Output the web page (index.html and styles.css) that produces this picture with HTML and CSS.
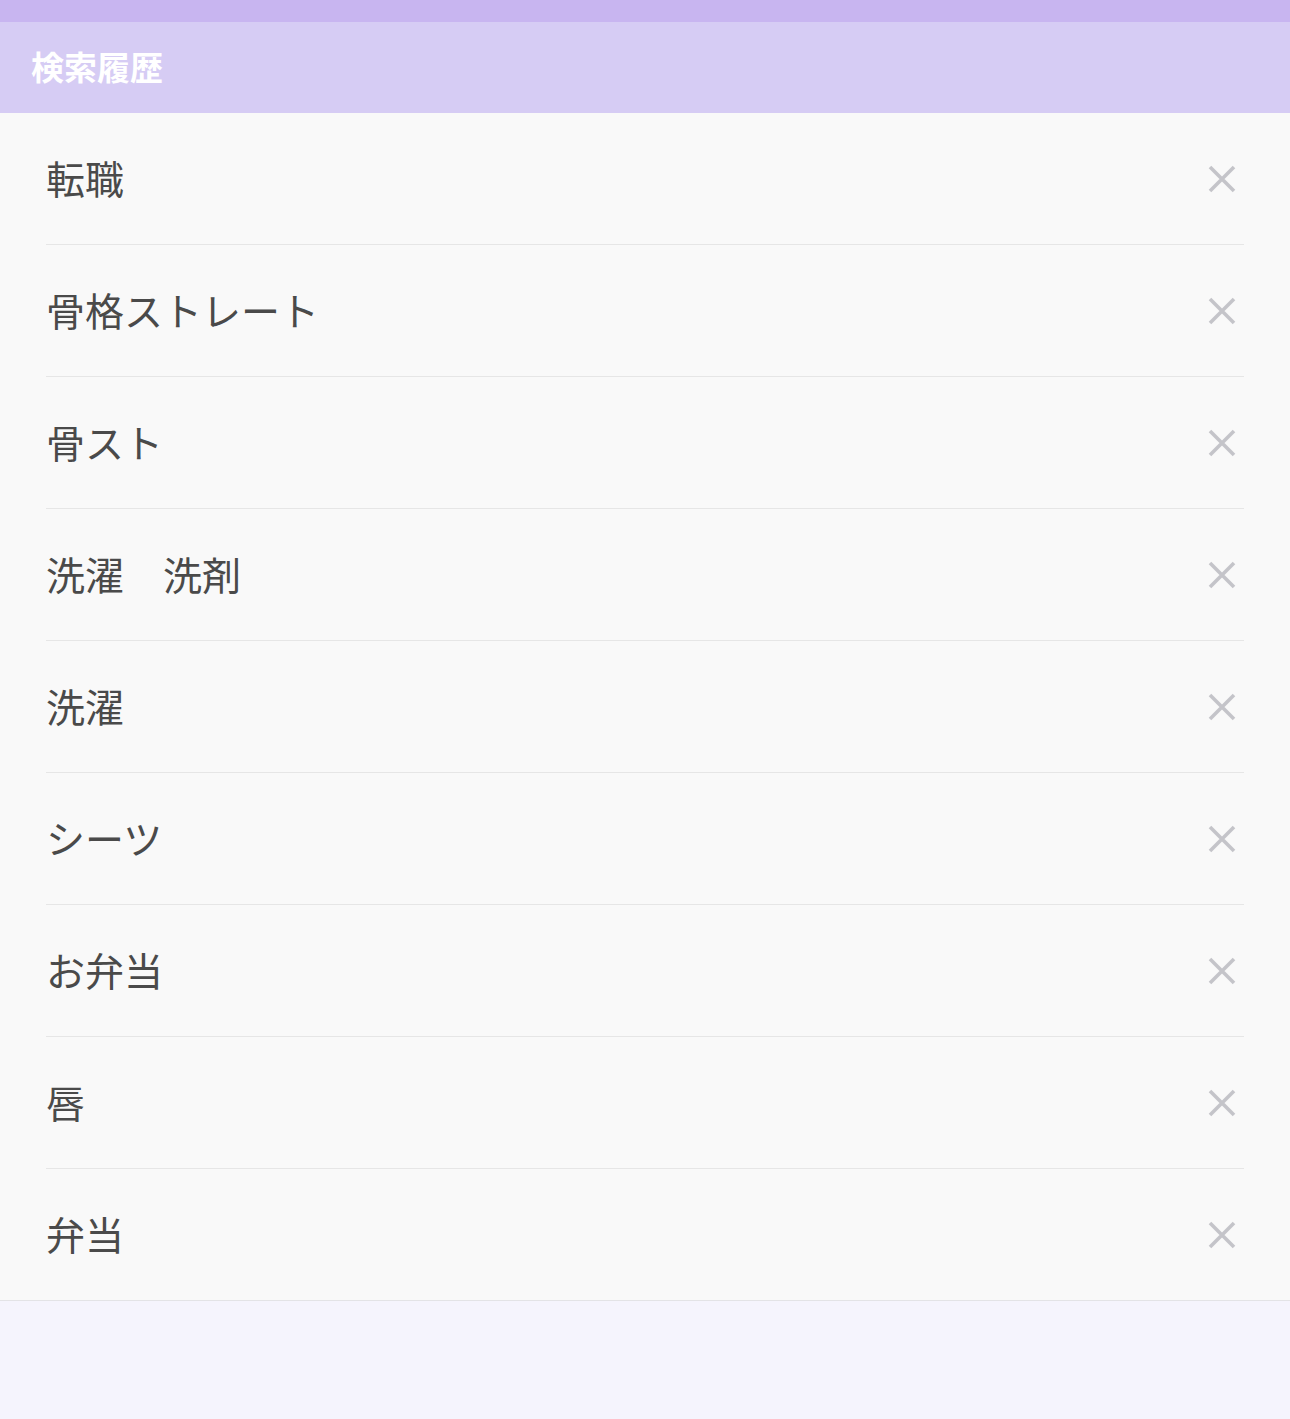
FILE: index.html
```html
<!DOCTYPE html>
<html>
<head>
    <title>検索履歴</title>
    <meta charset="UTF-8">
    <link rel="stylesheet" href="styles.css">
</head>
<body>
    <div class="status-bar"></div>
    <div class="header">
        <h1>検索履歴</h1>
    </div>

    <ul class="history-list">
        <li class="history-item"><span class="keyword">転職</span><button class="remove-btn"><svg viewBox="0 0 28 28"><path d="M2 2L26 26M26 2L2 26"/></svg></button></li>
        <li class="history-item"><span class="keyword">骨格ストレート</span><button class="remove-btn"><svg viewBox="0 0 28 28"><path d="M2 2L26 26M26 2L2 26"/></svg></button></li>
        <li class="history-item"><span class="keyword">骨スト</span><button class="remove-btn"><svg viewBox="0 0 28 28"><path d="M2 2L26 26M26 2L2 26"/></svg></button></li>
        <li class="history-item"><span class="keyword">洗濯　洗剤</span><button class="remove-btn"><svg viewBox="0 0 28 28"><path d="M2 2L26 26M26 2L2 26"/></svg></button></li>
        <li class="history-item"><span class="keyword">洗濯</span><button class="remove-btn"><svg viewBox="0 0 28 28"><path d="M2 2L26 26M26 2L2 26"/></svg></button></li>
        <li class="history-item"><span class="keyword">シーツ</span><button class="remove-btn"><svg viewBox="0 0 28 28"><path d="M2 2L26 26M26 2L2 26"/></svg></button></li>
        <li class="history-item"><span class="keyword">お弁当</span><button class="remove-btn"><svg viewBox="0 0 28 28"><path d="M2 2L26 26M26 2L2 26"/></svg></button></li>
        <li class="history-item"><span class="keyword">唇</span><button class="remove-btn"><svg viewBox="0 0 28 28"><path d="M2 2L26 26M26 2L2 26"/></svg></button></li>
        <li class="history-item"><span class="keyword">弁当</span><button class="remove-btn"><svg viewBox="0 0 28 28"><path d="M2 2L26 26M26 2L2 26"/></svg></button></li>
    </ul>
</body>
</html>
```

FILE: styles.css
```css
body {
    margin: 0;
    min-height: 1419px;
    background-color: #f5f4fd;
    font-family: "Noto Sans CJK JP", "Noto Sans", sans-serif;
}

.status-bar {
    height: 22px;
    background-color: #c8b5f0;
}

.header {
    height: 87px;
    display: flex;
    align-items: center;
    padding: 0 0 4px 31px;
    background-color: #d6ccf4;
}

.header h1 {
    margin: 0;
    font-size: 33px;
    font-weight: 700;
    color: #ffffff;
}

.history-list {
    list-style: none;
    margin: 0;
    padding: 0 46px;
    background-color: #f9f9f9;
    border-bottom: 1px solid #e3e3e6;
}

.history-item {
    display: flex;
    justify-content: space-between;
    align-items: center;
    height: 131px;
    padding-right: 8px;
    border-bottom: 1px solid #e6e6e6;
}

.history-item:last-child {
    border-bottom: none;
}

.keyword {
    margin-top: -4px;
    font-size: 39px;
    color: #4a4a4a;
    white-space: pre;
}

.remove-btn {
    display: flex;
    padding: 0;
    border: none;
    background: none;
    cursor: pointer;
}

.remove-btn svg {
    width: 28px;
    height: 28px;
    stroke: #c4c4c9;
    stroke-width: 3.6;
    fill: none;
}
```
